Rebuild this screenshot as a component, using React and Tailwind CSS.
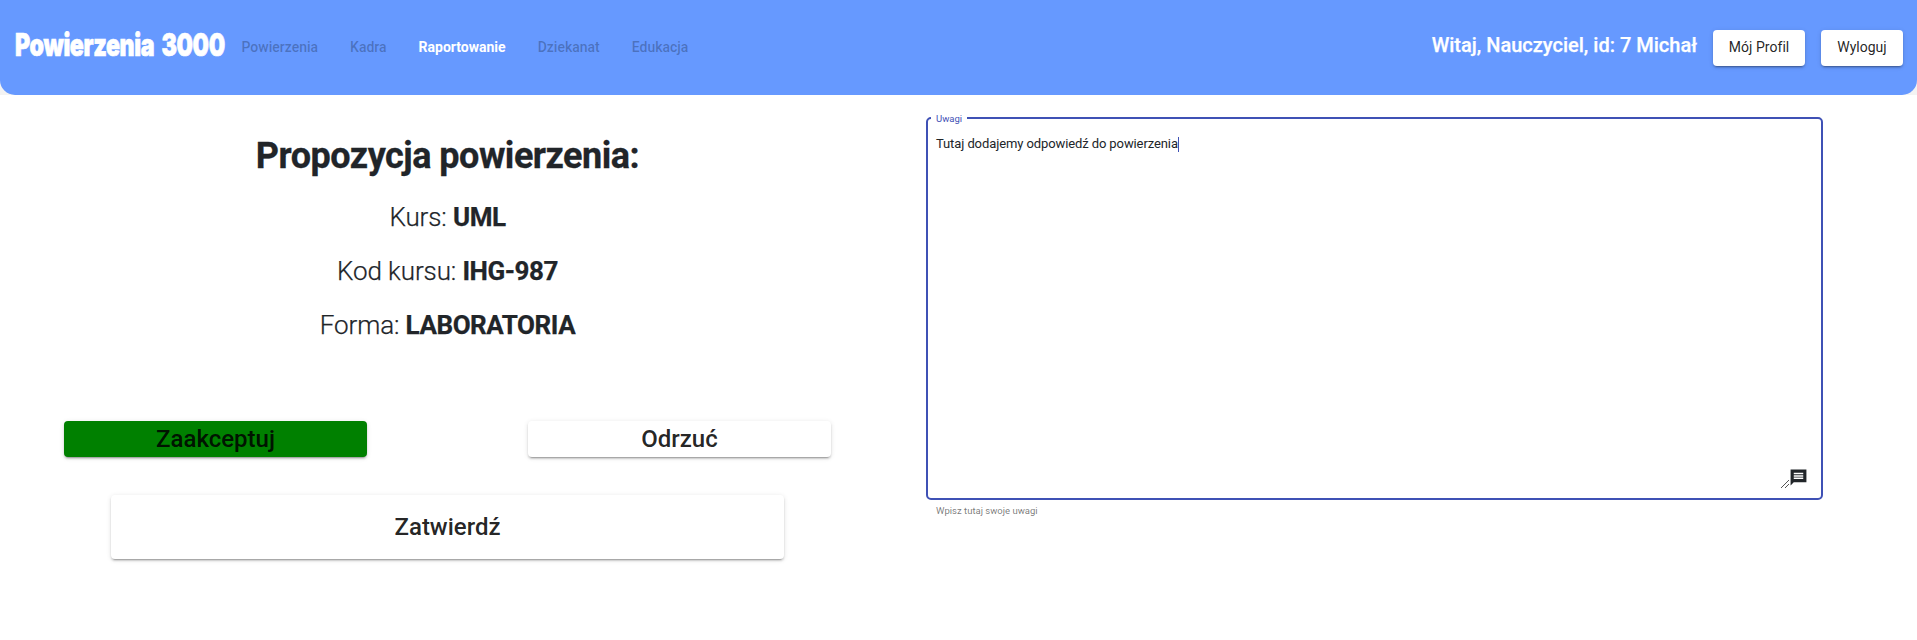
const navItems = [
  { label: 'Powierzenia' },
  { label: 'Kadra' },
  { label: 'Raportowanie', active: true },
  { label: 'Dziekanat' },
  { label: 'Edukacja' },
];

const details = [
  { name: 'Kurs', value: 'UML' },
  { name: 'Kod kursu', value: 'IHG-987' },
  { name: 'Forma', value: 'LABORATORIA' },
];

const raised =
  'rounded-[4px] shadow-[0_3px_1px_-2px_rgba(0,0,0,0.2),0_2px_2px_0_rgba(0,0,0,0.14),0_1px_5px_0_rgba(0,0,0,0.12)] text-black/87';

function Header() {
  return (
    <div className="bg-[#f3f3f3]">
      <header className="flex h-[95px] items-start rounded-b-[15px] bg-[#6699ff] pl-[15px] pr-[14px]">
        <div className="mt-[24px] h-[42px] w-[210px] shrink-0">
          <span className="inline-block origin-left scale-x-[0.735] whitespace-nowrap font-['Inter'] text-[31.5px] font-black leading-[42px] tracking-[-0.5px] text-white [-webkit-text-stroke:0.7px_white] [word-spacing:4px]">
            Powierzenia 3000
          </span>
        </div>
        <nav className="mt-[29px] flex pl-[0.5px] text-sm leading-9">
          {navItems.map((item) => (
            <a
              key={item.label}
              className={item.active ? 'px-4 font-bold text-white' : 'px-4 font-medium text-black/26'}
            >
              {item.label}
            </a>
          ))}
        </nav>
        <div className="ml-auto flex items-start gap-4">
          <span className="mt-[30px] text-xl font-medium leading-[30px] text-white [-webkit-text-stroke:0.25px_white]">
            Witaj, Nauczyciel, id: 7 Michał
          </span>
          <button className={`${raised} mt-[30px] h-9 w-[92px] bg-white pb-[2px] text-sm font-[450] tracking-[0.05px]`}>
            Mój Profil
          </button>
          <button className={`${raised} mt-[30px] h-9 w-[82px] bg-white pb-[2px] text-sm font-[450]`}>Wyloguj</button>
        </div>
      </header>
    </div>
  );
}

function Proposal() {
  return (
    <section className="flex w-[767px] flex-col items-center">
      <h1 className="mt-[38px] text-[36px] font-bold leading-[46px] tracking-[-0.5px] [-webkit-text-stroke:0.3px_#212529]">
        Propozycja powierzenia:
      </h1>
      <div className="mt-[11px]">
        {details.map((d) => (
          <p
            key={d.name}
            className="h-[54px] text-center text-[26px] font-light leading-[54px] tracking-[-0.1px] [-webkit-text-stroke:0.25px_#212529]"
          >
            {d.name}: <b className="font-bold tracking-[-0.45px]">{d.value}</b>
          </p>
        ))}
      </div>
      <div className="mt-[69px] flex w-full justify-between">
        <button className={`${raised} h-9 w-[303px] bg-[#008000] text-2xl font-[470] leading-9`}>Zaakceptuj</button>
        <button className={`${raised} h-9 w-[303px] bg-white text-2xl font-[470] leading-9`}>Odrzuć</button>
      </div>
      <button className={`${raised} mt-[38px] h-16 w-[673px] bg-white text-2xl font-[470]`}>Zatwierdź</button>
    </section>
  );
}

function Remarks() {
  return (
    <section className="ml-[95px] mt-[22px] w-[897px]">
      <div className="relative h-[383px] rounded-[5px] border-2 border-[#3f51b5] px-2 pt-[16px]">
        <span className="absolute -top-[6px] left-[3px] bg-white px-[5px] text-[9.5px] leading-3 text-[#3f51b5]">
          Uwagi
        </span>
        <div className="flex items-center text-[13px] leading-[18px] tracking-[-0.1px]">
          <span>Tutaj dodajemy odpowiedź do powierzenia</span>
          <span className="h-[15px] w-px bg-[#3f51b5]" />
        </div>
        <svg className="absolute bottom-[9px] right-[31px]" width="10" height="10" viewBox="0 0 10 10">
          <path d="M1 9 9 1M5 9 9 5" stroke="#555" strokeWidth="1" fill="none" />
        </svg>
        <svg className="absolute bottom-[11px] right-[13px]" width="19" height="19" viewBox="0 0 24 24" fill="#212529">
          <path d="M22 2H2v20l4-4h16V2zm-4 12H6v-2h12v2zm0-3H6V9h12v2zm0-3H6V6h12v2z" />
        </svg>
      </div>
      <p className="ml-[10px] mt-[5px] text-[9.5px] leading-3 text-black/54">Wpisz tutaj swoje uwagi</p>
    </section>
  );
}

export default function App() {
  return (
    <div className="min-h-screen overflow-hidden bg-white font-['Roboto',sans-serif] text-[#212529]">
      <Header />
      <main className="flex items-start pl-16">
        <Proposal />
        <Remarks />
      </main>
    </div>
  );
}
